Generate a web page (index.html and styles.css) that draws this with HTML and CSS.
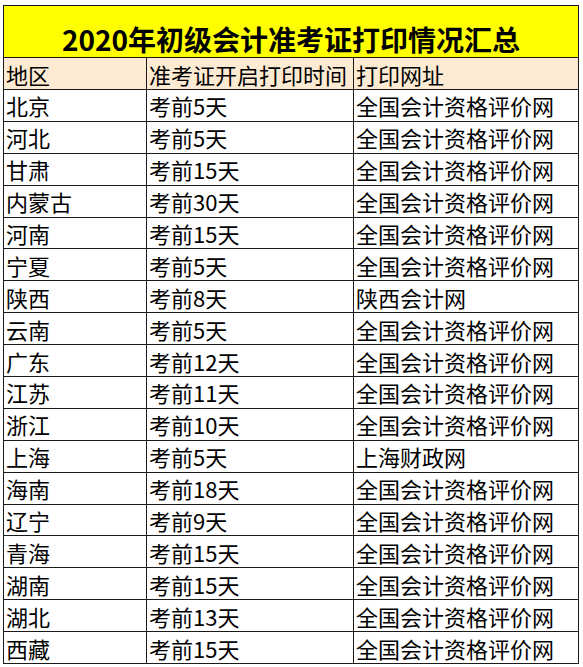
FILE: index.html
```html
<!DOCTYPE html>
<html lang="zh-CN">
<head>
<meta charset="utf-8">
<title>2020年初级会计准考证打印情况汇总</title>
<link rel="stylesheet" href="styles.css">
</head>
<body>
<table class="sheet">
  <colgroup>
    <col class="c1"><col class="c2"><col class="c3">
  </colgroup>
  <thead>
    <tr class="title-row"><th colspan="3">2020年初级会计准考证打印情况汇总</th></tr>
    <tr class="head-row"><th>地区</th><th>准考证开启打印时间</th><th>打印网址</th></tr>
  </thead>
  <tbody>
    <tr><td>北京</td><td>考前5天</td><td>全国会计资格评价网</td></tr>
    <tr><td>河北</td><td>考前5天</td><td>全国会计资格评价网</td></tr>
    <tr><td>甘肃</td><td>考前15天</td><td>全国会计资格评价网</td></tr>
    <tr><td>内蒙古</td><td>考前30天</td><td>全国会计资格评价网</td></tr>
    <tr><td>河南</td><td>考前15天</td><td>全国会计资格评价网</td></tr>
    <tr><td>宁夏</td><td>考前5天</td><td>全国会计资格评价网</td></tr>
    <tr><td>陕西</td><td>考前8天</td><td>陕西会计网</td></tr>
    <tr><td>云南</td><td>考前5天</td><td>全国会计资格评价网</td></tr>
    <tr><td>广东</td><td>考前12天</td><td>全国会计资格评价网</td></tr>
    <tr><td>江苏</td><td>考前11天</td><td>全国会计资格评价网</td></tr>
    <tr><td>浙江</td><td>考前10天</td><td>全国会计资格评价网</td></tr>
    <tr><td>上海</td><td>考前5天</td><td>上海财政网</td></tr>
    <tr><td>海南</td><td>考前18天</td><td>全国会计资格评价网</td></tr>
    <tr><td>辽宁</td><td>考前9天</td><td>全国会计资格评价网</td></tr>
    <tr><td>青海</td><td>考前15天</td><td>全国会计资格评价网</td></tr>
    <tr><td>湖南</td><td>考前15天</td><td>全国会计资格评价网</td></tr>
    <tr><td>湖北</td><td>考前13天</td><td>全国会计资格评价网</td></tr>
    <tr><td>西藏</td><td>考前15天</td><td>全国会计资格评价网</td></tr>
  </tbody>
</table>
</body>
</html>
```

FILE: styles.css
```css
html, body {
  margin: 0;
  padding: 0;
  background: #ffffff;
}

body {
  padding: 5px 0 0 3px;
  font-family: "Noto Sans CJK SC", "Noto Sans", sans-serif;
  color: #000000;
}

.sheet {
  border-collapse: collapse;
  table-layout: fixed;
  width: 575px;
}

.c1 { width: 143px; }
.c2 { width: 207px; }
.c3 { width: 225px; }

.sheet th,
.sheet td {
  border: 1px solid #1a1a1a;
  padding: 0 0 0 2px;
  text-align: left;
  font-weight: 400;
  font-size: 22px;
  line-height: 26px;
  white-space: nowrap;
  overflow: hidden;
  vertical-align: middle;
}

.title-row {
  height: 52px;
}

.title-row th {
  background: #ffff00;
  text-align: center;
  font-weight: 700;
  font-size: 28px;
  line-height: 30px;
  vertical-align: bottom;
  padding: 0 0 3px 0;
}

.head-row {
  height: 32px;
}

.head-row th {
  background: #fcebd2;
}

.sheet tbody tr {
  height: 31.9px;
}
```
